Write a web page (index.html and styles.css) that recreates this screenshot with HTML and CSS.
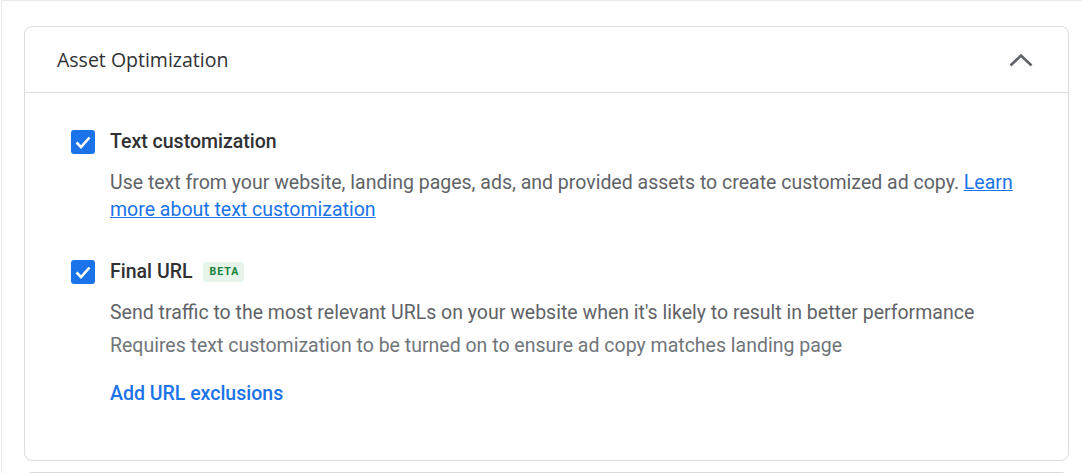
FILE: index.html
```html
<!DOCTYPE html>
<html lang="en">
<head>
	<meta charset="UTF-8">
	<title>Asset Optimization</title>
	<link rel="stylesheet" href="styles.css">
</head>
<body>
	<div class="page">
		<section class="card">
			<div class="card-head">
				<h2 class="card-title">Asset Optimization</h2>
				<svg class="chevron" width="28" height="28" viewBox="0 0 28 28"><polyline points="3.5,19.5 14,9.5 24.5,19.5" fill="none" stroke="#5f6368" stroke-width="2.6"/></svg>
			</div>
			<div class="card-body">
				<div class="option">
					<span class="check"><svg width="24" height="24" viewBox="0 0 24 24"><polyline points="5.5,12.5 10,17 18.5,7.5" fill="none" stroke="#fff" stroke-width="2.6"/></svg></span>
					<div class="option-text">
						<div class="option-title">Text customization</div>
						<p class="desc">Use text from your website, landing pages, ads, and provided assets to create customized ad copy. <a href="#">Learn more about text customization</a></p>
					</div>
				</div>
				<div class="option">
					<span class="check"><svg width="24" height="24" viewBox="0 0 24 24"><polyline points="5.5,12.5 10,17 18.5,7.5" fill="none" stroke="#fff" stroke-width="2.6"/></svg></span>
					<div class="option-text">
						<div class="option-title">Final URL <span class="badge">BETA</span></div>
						<p class="desc">Send traffic to the most relevant URLs on your website when it's likely to result in better performance</p>
						<p class="desc hint">Requires text customization to be turned on to ensure ad copy matches landing page</p>
						<a class="action" href="#">Add URL exclusions</a>
					</div>
				</div>
			</div>
		</section>
		<section class="card next"></section>
	</div>
</body>
</html>
```

FILE: styles.css
```css
*{
	margin: 0;
	padding: 0;
	box-sizing: border-box;
}
html,body{
	background: #fff;
	font-family: Roboto, "Noto Sans", sans-serif;
	color: #3c4043;
	overflow: hidden;
}
.page{
	margin-left: 1px;
	border-left: 1px solid #e8eaed;
	border-top: 1px solid #e8eaed;
	padding: 25px 13px 0 22px;
	height: 473px;
	overflow: hidden;
}
.card{
	border: 1px solid #dadce0;
	border-radius: 8px;
	height: 435px;
}
.card.next{
	margin-top: 11px;
	height: 40px;
}
.card-head{
	display: flex;
	align-items: center;
	justify-content: space-between;
	height: 66px;
	padding: 0 33px 0 32px;
	border-bottom: 1px solid #dadce0;
}
.card-title{
	font-family: "Open Sans", Roboto, sans-serif;
	font-size: 19.5px;
	font-weight: 400;
	color: #303134;
}
.card-body{
	padding: 36px 46px 0 46px;
}
.option{
	display: flex;
	gap: 15px;
	margin-bottom: 36px;
}
.check{
	flex: none;
	width: 24px;
	height: 24px;
	border-radius: 3px;
	background: #1a73e8;
	display: flex;
	align-items: center;
	justify-content: center;
	margin-top: 1px;
}
.option-title{
	font-size: 19.5px;
	font-weight: 500;
	color: #303134;
	line-height: 26px;
	display: flex;
	align-items: center;
	gap: 11px;
}
.badge{
	font-size: 10.5px;
	font-weight: 700;
	letter-spacing: 1px;
	color: #188038;
	background: #e6f4ea;
	border-radius: 3px;
	padding: 0 5px 0 6px;
	line-height: 20px;
}
.desc{
	font-size: 19.5px;
	line-height: 27px;
	color: #5f6368;
	margin-top: 14px;
}
.desc + .desc{
	margin-top: 6px;
}
.hint{
	color: #70757a;
}
.desc a{
	color: #1a73e8;
	text-decoration: underline;
}
.action{
	display: inline-block;
	margin-top: 23px;
	font-size: 19.5px;
	font-weight: 500;
	color: #1a73e8;
	text-decoration: none;
}
```
